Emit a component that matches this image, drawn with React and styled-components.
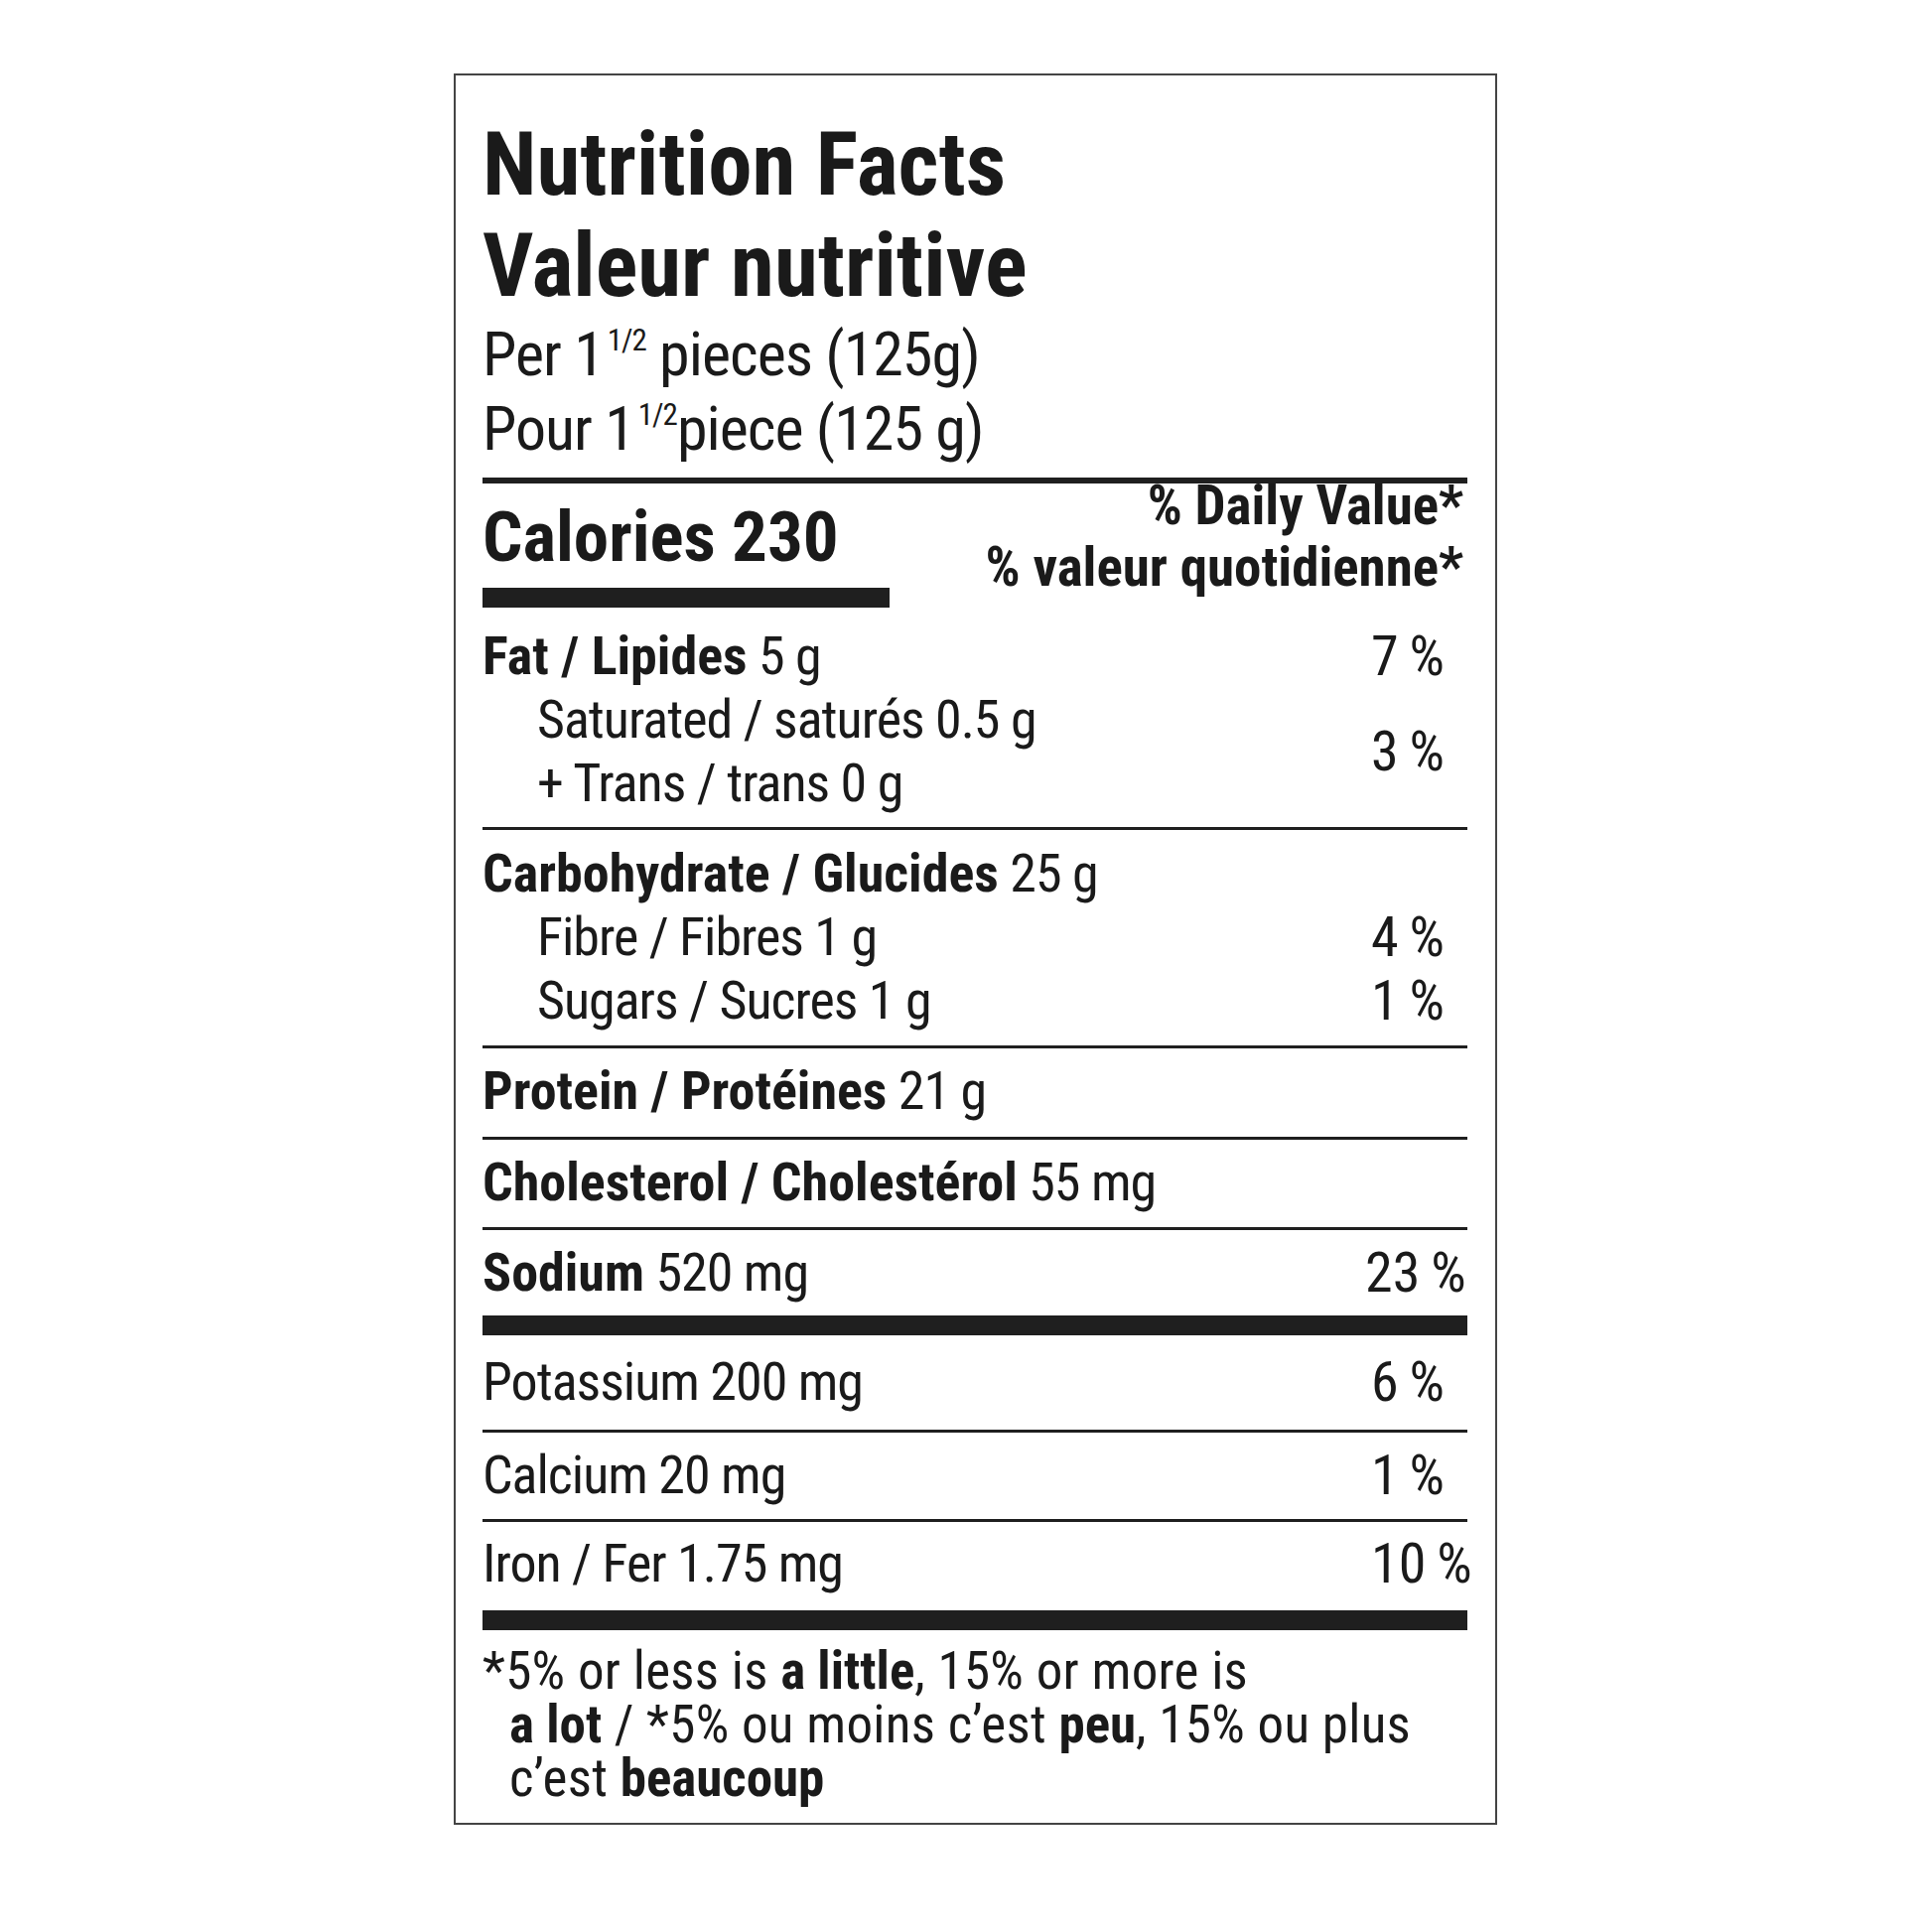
import React from "react";
import styled, { createGlobalStyle } from "styled-components";

const GlobalStyle = createGlobalStyle`
  body {
    margin: 0;
    background: #ffffff;
  }
`;

const FONT = `"Roboto Condensed", "Liberation Sans Narrow", "DejaVu Sans Condensed", sans-serif`;

// label frame
const Label = styled.section`
  box-sizing: border-box;
  width: 1051px;
  margin: 74px 0 0 457px;
  padding: 39px 28px 18px 27px;
  border: 2px solid #444;
  font-family: ${FONT};
  color: #1a1a1a;
  background: #fff;
  white-space: nowrap;
`;

const Title = styled.h1`
  margin: 0;
  font-size: 89px;
  line-height: 102px;
  font-weight: 700;
`;

const Serving = styled.div`
  font-size: 62px;
  line-height: 75px;
  font-weight: 400;
  letter-spacing: -1px;
`;

const Sup = styled.sup`
  font-size: 0.5em;
  line-height: 0;
  vertical-align: 0.8em;
  margin-left: ${(p) => p.$gap || 4}px;
`;

const Rule = styled.hr`
  margin: ${(p) => p.$mt || 0}px 0 0 0;
  border: 0;
  height: ${(p) => p.$h || 3}px;
  background: #1f1f1f;
`;

const CalorieBlock = styled.div`
  display: flex;
  justify-content: space-between;
  align-items: flex-start;
`;

const CalorieCol = styled.div`
  display: flex;
  flex-direction: column;
  padding-top: 14px;
`;

const Calories = styled.div`
  font-size: 71px;
  line-height: 80px;
  font-weight: 700;
`;

const CalorieBar = styled.div`
  margin-top: 11px;
  width: 410px;
  height: 20px;
  background: #1f1f1f;
`;

const DailyHead = styled.div`
  margin-top: -9px;
  margin-right: 4px;
  text-align: right;
  font-size: 55px;
  line-height: 62px;
  font-weight: 700;
`;

const Section = styled.div`
  padding: ${(p) => p.$pt}px 0 ${(p) => p.$pb}px 0;
`;

const Row = styled.div`
  display: grid;
  grid-template-columns: 1fr 97px;
  font-size: 54px;
  line-height: 64px;
  letter-spacing: -1px;
`;

const Name = styled.div`
  padding-left: ${(p) => (p.$indent ? 55 : 0)}px;
`;

const Pct = styled.div`
  align-self: center;
  font-size: 56px;
  letter-spacing: 0;
  word-spacing: -2px;
  margin-left: ${(p) => p.$shift || 0}px;
`;

const B = styled.b`
  font-weight: 700;
  letter-spacing: 0;
`;

const Footnote = styled.p`
  margin: 0;
  padding: 14px 0 0 27px;
  text-indent: -27px;
  font-size: 53px;
  line-height: 54px;
  letter-spacing: 0.3px;
`;

export default function App() {
  return (
    <>
      <GlobalStyle />
      <Label>
        <Title>
          Nutrition Facts
          <br />
          Valeur nutritive
        </Title>
        <Serving>
          Per 1<Sup>1/2</Sup> pieces (125g)
          <br />
          Pour 1<Sup>1/2</Sup>piece (125 g)
        </Serving>
        <Rule $mt={12} $h={6} />

        <CalorieBlock>
          <CalorieCol>
            <Calories>Calories 230</Calories>
            <CalorieBar />
          </CalorieCol>
          <DailyHead>
            % Daily Value*
            <br />
            % valeur quotidienne*
          </DailyHead>
        </CalorieBlock>

        <Section $pt={17} $pb={12}>
          <Row>
            <Name>
              <B>Fat / Lipides</B> 5 g
            </Name>
            <Pct>7 %</Pct>
          </Row>
          <Row>
            <Name $indent>
              Saturated / saturés 0.5 g
              <br />+ Trans / trans 0 g
            </Name>
            <Pct>3 %</Pct>
          </Row>
        </Section>
        <Rule />

        <Section $pt={12} $pb={13}>
          <Row>
            <Name>
              <B>Carbohydrate / Glucides</B> 25 g
            </Name>
          </Row>
          <Row>
            <Name $indent>Fibre / Fibres 1 g</Name>
            <Pct>4 %</Pct>
          </Row>
          <Row>
            <Name $indent>Sugars / Sucres 1 g</Name>
            <Pct>1 %</Pct>
          </Row>
        </Section>
        <Rule />

        <Section $pt={11} $pb={14}>
          <Row>
            <Name>
              <B>Protein / Protéines</B> 21 g
            </Name>
          </Row>
        </Section>
        <Rule />

        <Section $pt={11} $pb={13}>
          <Row>
            <Name>
              <B>Cholesterol / Cholestérol</B> 55 mg
            </Name>
          </Row>
        </Section>
        <Rule />

        <Section $pt={11} $pb={11}>
          <Row>
            <Name>
              <B>Sodium</B> 520 mg
            </Name>
            <Pct $shift={-6}>23 %</Pct>
          </Row>
        </Section>
        <Rule $h={20} />

        <Section $pt={15} $pb={16}>
          <Row>
            <Name>Potassium 200 mg</Name>
            <Pct>6 %</Pct>
          </Row>
        </Section>
        <Rule />

        <Section $pt={11} $pb={12}>
          <Row>
            <Name>Calcium 20 mg</Name>
            <Pct>1 %</Pct>
          </Row>
        </Section>
        <Rule />

        <Section $pt={10} $pb={15}>
          <Row>
            <Name>Iron / Fer 1.75 mg</Name>
            <Pct>10 %</Pct>
          </Row>
        </Section>
        <Rule $h={20} />

        <Footnote>
          *5% or less is <B>a little</B>, 15% or more is
          <br />
          <B>a lot</B> / *5% ou moins c’est <B>peu</B>, 15% ou plus
          <br />
          c’est <B>beaucoup</B>
        </Footnote>
      </Label>
    </>
  );
}
